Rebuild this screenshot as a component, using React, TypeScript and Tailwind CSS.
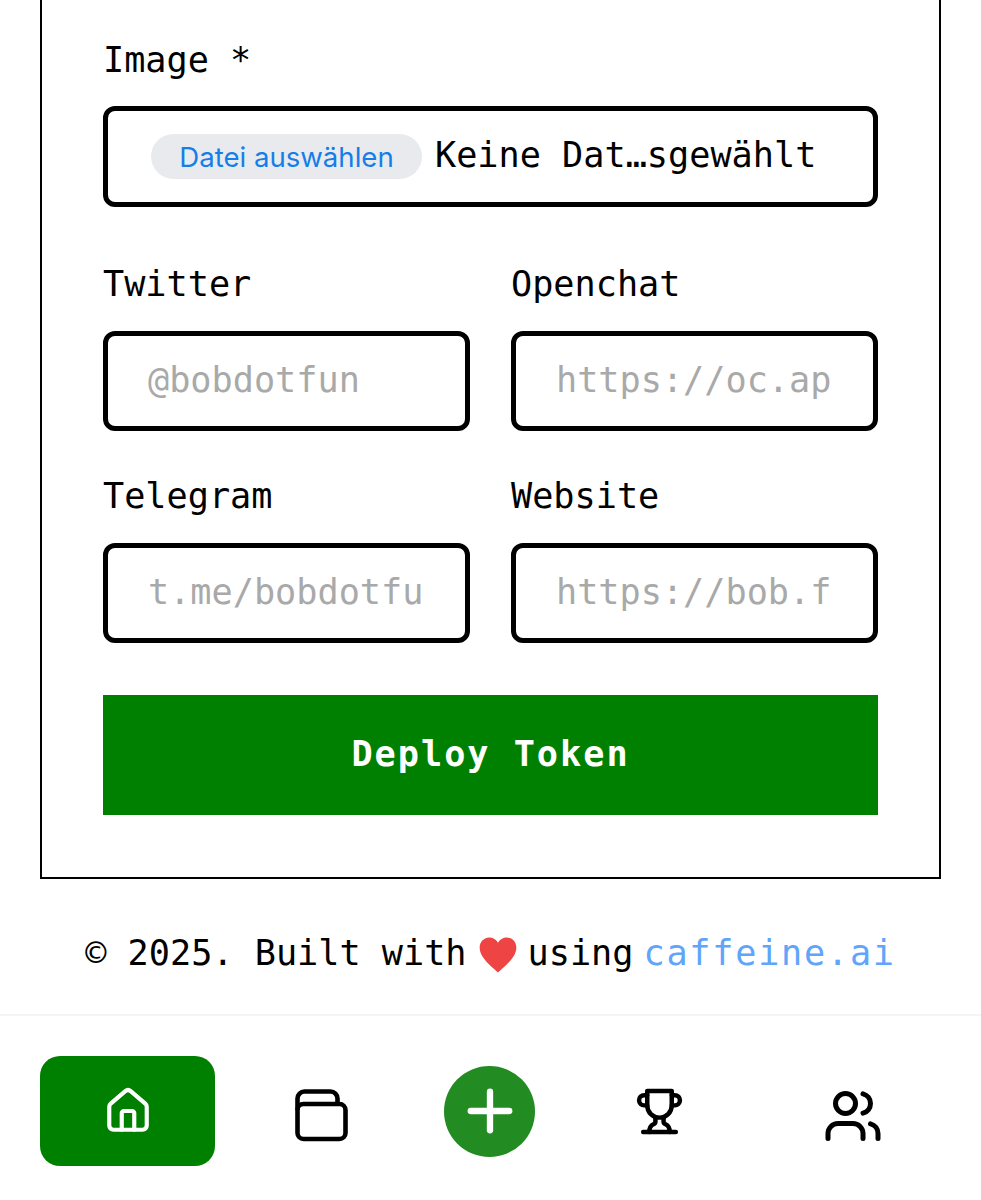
import { House, Plus, Users } from "lucide-react";

const mono = "font-['DejaVu_Sans_Mono','Liberation_Mono',monospace]";

function Field({ label, placeholder }: { label: string; placeholder: string }) {
  return (
    <div className="flex flex-col">
      <label className="h-[37px] text-[35.2px] leading-[33px] text-black">{label}</label>
      <input
        readOnly
        placeholder={placeholder}
        className={`mt-[27px] h-[100px] w-full rounded-[12px] border-[5px] border-black bg-white px-[40px] pb-[3px] text-[35.2px] outline-none placeholder:text-[#a9a9a9] ${mono}`}
      />
    </div>
  );
}

export default function App() {
  return (
    <div className={`flex h-[1200px] w-[981px] flex-col overflow-hidden bg-white ${mono}`}>
      <div className="mx-[40px] flex h-[879px] flex-col border-x-2 border-b-2 border-black px-[61px] pt-[42px]">
        <label className="h-[37px] text-[35.2px] leading-[35px] text-black">Image *</label>
        <div className="mt-[27px] flex h-[101px] items-center rounded-[12px] border-[5px] border-black pl-[43px]">
          <span className="flex h-[45px] w-[271px] items-center justify-center rounded-full bg-[#e9eaed] pt-[2px] font-['Inter',sans-serif] text-[27.6px] text-[#157ee8]">
            Datei auswählen
          </span>
          <span className="ml-[13px] whitespace-nowrap pb-[2px] text-[35.2px] text-black">Keine Dat…sgewählt</span>
        </div>
        <div className="mt-[60px] grid grid-cols-2 gap-x-[41px] gap-y-[48px]">
          <Field label="Twitter" placeholder="@bobdotfun" />
          <Field label="Openchat" placeholder="https://oc.ap" />
          <Field label="Telegram" placeholder="t.me/bobdotfu" />
          <Field label="Website" placeholder="https://bob.f" />
        </div>
        <button className="mt-[52px] h-[120px] w-full bg-[#008000] pb-[2px] text-[35.2px] font-bold tracking-[2px] text-white">
          Deploy Token
        </button>
      </div>
      <div className="flex h-[137px] items-center justify-center border-b-2 border-[#f3f4f6] pt-[14px] text-[35.2px] text-black">
        <span>© 2025. Built with</span>
        <svg viewBox="0 0 24 24" className="ml-[11px] mr-[10px] mt-[2px] h-[40px] w-[40px]" fill="#ef4444">
          <path d="M12 22.500 C9 19.500 1 14 1 7.500 C1 4 3.700 1.500 6.800 1.500 C9 1.500 11 2.700 12 4.700 C13 2.700 15 1.500 17.200 1.500 C20.300 1.500 23 4 23 7.500 C23 14 15 19.500 12 22.500 Z" />
        </svg>
        <span>using</span>
        <span className="ml-[10px] tracking-[1.75px] text-[#60a5fa]">caffeine.ai</span>
      </div>
      <nav className="flex flex-1 items-start pl-[40px] pt-[40px]">
        <div className="flex h-[110px] w-[175px] items-center justify-center rounded-[20px] bg-[#008000]">
          <House size={50} color="white" strokeWidth={2} />
        </div>
        <div className="flex h-[110px] w-[213px] items-center justify-center pt-[10px]">
          <svg viewBox="0 0 54 54" className="h-[54px] w-[54px]" fill="none" stroke="black" strokeWidth="4.600" strokeLinejoin="round">
            <path d="M2.500 21V9.500a7 7 0 0 1 7-7h26a7 7 0 0 1 7 7V15" />
            <rect x="2.500" y="15" width="48" height="35" rx="6" />
          </svg>
        </div>
        <div className="flex h-[110px] w-[123px] items-center justify-center">
          <div className="flex h-[91px] w-[91px] items-center justify-center rounded-full bg-[#228b22]">
            <Plus size={66} color="white" strokeWidth={2.300} />
          </div>
        </div>
        <div className="flex h-[110px] w-[217px] items-center justify-center">
          <svg viewBox="0 0 24 24" className="h-[49px] w-[49px]" fill="none" stroke="black" strokeWidth="2.200" strokeLinecap="round" strokeLinejoin="round">
            <path d="M6 9H4.500a2.500 2.500 0 0 1 0-5H6" />
            <path d="M18 9h1.500a2.500 2.500 0 0 0 0-5H18" />
            <path d="M4 22h16" />
            <path d="M10 14.660V17c0 .550-.470.980-.970 1.210C7.850 18.750 7 20.240 7 22" />
            <path d="M14 14.660V17c0 .550.470.980.970 1.210C16.150 18.750 17 20.240 17 22" />
            <path d="M18 2H6v7a6 6 0 0 0 12 0V2Z" />
          </svg>
        </div>
        <div className="flex h-[110px] w-[169px] items-center justify-center pt-[10px]">
          <Users size={60} color="black" strokeWidth={2} />
        </div>
      </nav>
    </div>
  );
}
